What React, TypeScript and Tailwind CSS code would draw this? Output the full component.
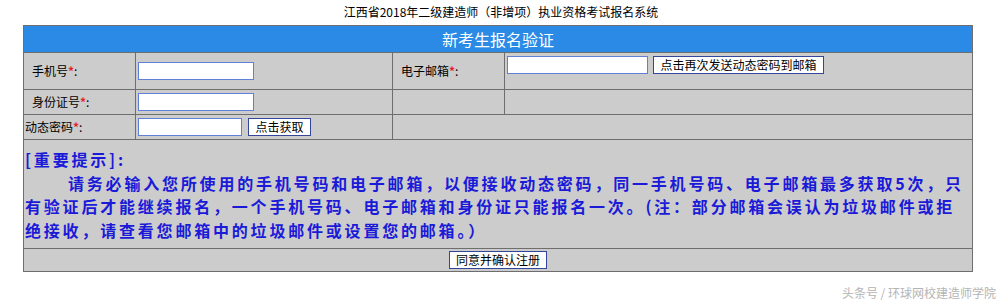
const cjk = { fontFamily: '"Noto Sans CJK SC", "Liberation Sans", sans-serif' };

function Label({ text, pad = true }: { text: string; pad?: boolean }) {
  return (
    <div className={`flex h-full items-center bg-[#cccccc] text-[12px] text-black ${pad ? "pl-[8px]" : "pl-[1px]"}`}>
      <span>{text}</span>
      <span className="font-bold text-[#e8202a]">*</span>
      <span>:</span>
    </div>
  );
}

function Input({ w }: { w: string }) {
  return <input className={`${w} h-[18px] border border-[#5f7fd8] bg-white outline-none`} />;
}

function Btn({ children, w }: { children: string; w: string }) {
  return (
    <button className={`${w} flex h-[18px] items-center justify-center border border-[#34469a] bg-white text-[12px] leading-none text-black`}>
      {children}
    </button>
  );
}

export default function App() {
  return (
    <div className="h-[301px] w-[1002px] bg-white" style={cjk}>
      <div className="flex h-[25px] items-center justify-center pb-[1px] text-[12px] text-black">
        江西省2018年二级建造师（非增项）执业资格考试报名系统
      </div>

      <div className="ml-[23px] w-[950px] border border-[#6e6e6e] bg-[#6e6e6e]">
        <div className="grid grid-cols-[111px_256px_111px_467px] grid-rows-[26px_36px_24px_24px_108px_22px] gap-px">
          <div className="col-span-4 flex items-center justify-center bg-[#2a8ae6] pb-[1px] text-[16px] text-white">
            新考生报名验证
          </div>

          <Label text="手机号" />
          <div className="flex items-center bg-[#cccccc] pl-[2px]">
            <Input w="w-[116px]" />
          </div>
          <Label text="电子邮箱" />
          <div className="flex items-start gap-[5px] bg-[#cccccc] pl-[2px] pt-[3px]">
            <Input w="w-[141px]" />
            <Btn w="w-[171px]">点击再次发送动态密码到邮箱</Btn>
          </div>

          <Label text="身份证号" />
          <div className="flex items-center bg-[#cccccc] pl-[2px]">
            <Input w="w-[116px]" />
          </div>
          <div className="bg-[#cccccc]" />
          <div className="bg-[#cccccc]" />

          <Label text="动态密码" pad={false} />
          <div className="flex items-center gap-[6px] bg-[#cccccc] pl-[2px]">
            <Input w="w-[104px]" />
            <Btn w="w-[63px]">点击获取</Btn>
          </div>
          <div className="col-span-2 bg-[#cccccc]" />

          <div
            className="col-span-4 flex flex-col justify-center bg-[#cccccc] pl-[1px] pt-[2px] text-[16px] font-bold leading-[23.5px] tracking-[2.8px] text-[#1a1ad8] whitespace-nowrap"
          >
            <div>[重要提示]:</div>
            <div className="pl-[43px]">请务必输入您所使用的手机号码和电子邮箱，以便接收动态密码，同一手机号码、电子邮箱最多获取5次，只</div>
            <div>有验证后才能继续报名，一个手机号码、电子邮箱和身份证只能报名一次。(注：部分邮箱会误认为垃圾邮件或拒</div>
            <div>绝接收，请查看您邮箱中的垃圾邮件或设置您的邮箱。）</div>
          </div>

          <div className="col-span-4 flex items-center justify-center bg-[#cccccc]">
            <Btn w="w-[98px]">同意并确认注册</Btn>
          </div>
        </div>
      </div>

      <div className="mt-[12px] flex justify-end pr-[6px] text-[12px] text-[#b4b4b4]">
        头条号 / 环球网校建造师学院
      </div>
    </div>
  );
}
